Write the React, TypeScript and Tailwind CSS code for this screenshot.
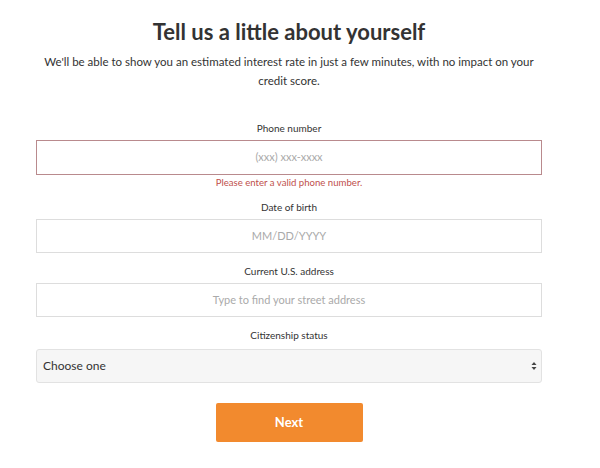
const font = { fontFamily: "Lato, 'Noto Sans', sans-serif" };

const Label = ({ text, className = "" }: { text: string; className?: string }) => (
    <div className={`text-center text-[10px] text-[#333] leading-[14px] ${className}`}>{text}</div>
);

const App = () => {
    return (
        <div className="w-[600px] h-[468px] bg-white font-['Lato','Noto_Sans',sans-serif]">
            <div className="ml-[36px] w-[506px] flex flex-col">
                <h1 className="pt-[18px] text-center text-[22px] leading-[28px] font-bold text-[#333]">
                    Tell us a little about yourself
                </h1>
                <p className="mt-[6px] mx-auto w-[495px] text-center text-[11.5px] leading-[19px] text-[#333]">
                    We'll be able to show you an estimated interest rate in just a few minutes, with no impact on your credit score.
                </p>

                <Label text="Phone number" className="mt-[31px]" />
                <div className="mt-[5px] h-[35px] border border-[#b98a8d] flex items-center justify-center text-[11px] text-[#aaa]">
                    (xxx) xxx-xxxx
                </div>
                <div className="mt-[1px] text-center text-[9.6px] leading-[14px] text-[#c0504d]">
                    Please enter a valid phone number.
                </div>

                <Label text="Date of birth" className="mt-[10px]" />
                <div className="mt-[5px] h-[34px] border border-[#ddd] flex items-center justify-center text-[11px] text-[#aaa]">
                    MM/DD/YYYY
                </div>

                <Label text="Current U.S. address" className="mt-[11px]" />
                <div className="mt-[5px] h-[34px] border border-[#ddd] flex items-center justify-center text-[11px] text-[#aaa]">
                    Type to find your street address
                </div>

                <Label text="Citizenship status" className="mt-[11px]" />
                <div className="mt-[7px] h-[34px] border border-[#e2e2e2] rounded-[3px] bg-[#f6f6f6] flex items-center justify-between pl-[6px] pr-[4px]">
                    <span className="text-[12px] text-[#333]">Choose one</span>
                    <svg width="6" height="10" viewBox="0 0 6 10">
                        <path d="M3 1 L5.5 4 L0.5 4 Z" fill="#444" />
                        <path d="M3 9 L5.5 6 L0.5 6 Z" fill="#444" />
                    </svg>
                </div>

                <div className="mt-[20px] flex justify-center">
                    <button
                        style={font}
                        className="w-[147px] h-[39px] bg-[#f28a2e] rounded-[2px] text-white text-[13px] font-bold"
                    >
                        Next
                    </button>
                </div>
            </div>
        </div>
    );
};

export default App;
